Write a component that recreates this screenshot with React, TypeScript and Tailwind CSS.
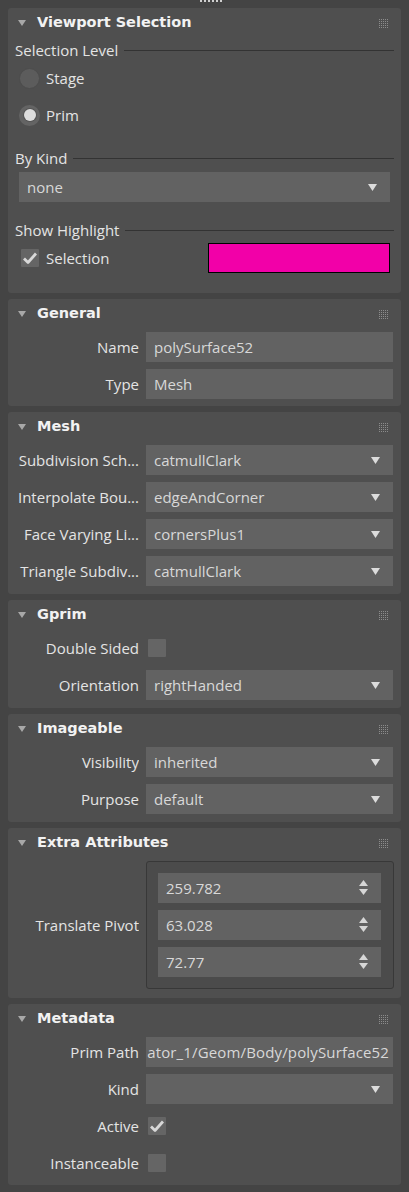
import React from "react";

const body = "font-['Open_Sans',sans-serif] text-[15px]";
const bold = "font-['DejaVu_Sans',sans-serif] font-bold text-[14.5px]";

function Grip() {
  const dots = [];
  for (let r = 0; r < 5; r++) {
    for (let c = 0; c < 5; c++) {
      dots.push(<rect key={`${r}-${c}`} x={c * 2} y={r * 2} width="1" height="1" fill="#8c8c8c" />);
    }
  }
  return (
    <svg width="9" height="9" viewBox="0 0 9 9">
      {dots}
    </svg>
  );
}

function Caret() {
  return (
    <svg width="8" height="6" viewBox="0 0 8 6">
      <path d="M0 0 H8 L4 6 Z" fill="#a8a8a8" />
    </svg>
  );
}

function DownArrow() {
  return (
    <svg width="9" height="7" viewBox="0 0 9 7">
      <path d="M0 0 H9 L4.5 7 Z" fill="#dcdcdc" />
    </svg>
  );
}

function Spin() {
  return (
    <svg width="9" height="16" viewBox="0 0 9 16">
      <path d="M4.5 0 L9 6 H0 Z" fill="#d6d6d6" />
      <path d="M0 9 H9 L4.5 15 Z" fill="#d6d6d6" />
    </svg>
  );
}

function Tick() {
  return (
    <svg width="14" height="12" viewBox="0 0 14 12">
      <path d="M1 6.5 L5 10.5 L13 1.5" fill="none" stroke="#d8d8d8" strokeWidth="2.8" strokeLinejoin="round" />
    </svg>
  );
}

function Panel({ title, children }: { title: string; children: React.ReactNode }) {
  return (
    <section className="rounded-[3px] bg-[#4f4f4f]">
      <div className="flex h-[30px] items-center pl-[10px] pr-[13px]">
        <Caret />
        <h2 className={`${bold} ml-[11px] text-[#f2f2f2]`}>{title}</h2>
        <div className="ml-auto">
          <Grip />
        </div>
      </div>
      {children}
    </section>
  );
}

function Row({ label, children }: { label: string; children: React.ReactNode }) {
  return (
    <div className="grid grid-cols-[131px_1fr] items-center gap-x-[7px]">
      <span className="truncate text-right text-[#e4e4e4]">{label}</span>
      {children}
    </div>
  );
}

function Field({ value, arrow, spin }: { value?: string; arrow?: boolean; spin?: boolean }) {
  return (
    <div className="flex h-[30px] items-center bg-[#626262] pl-[8px] pr-[13px] text-[#d8d8d8]">
      <span className="whitespace-nowrap">{value}</span>
      {arrow && (
        <span className="ml-auto flex">
          <DownArrow />
        </span>
      )}
      {spin && (
        <span className="ml-auto flex">
          <Spin />
        </span>
      )}
    </div>
  );
}

function Check({ on }: { on?: boolean }) {
  return (
    <div className="flex h-[18px] w-[18px] items-center justify-center rounded-[1px] bg-[#656565]">
      {on && <Tick />}
    </div>
  );
}

function GroupLabel({ text }: { text: string }) {
  return (
    <div className="flex h-[20px] items-center gap-[6px]">
      <span className="text-[#e4e4e4]">{text}</span>
      <div className="h-px flex-1 bg-[#333333]" />
    </div>
  );
}

export default function App() {
  return (
    <div className={`${body} min-h-screen w-[409px] bg-[#444444] px-[8px] pb-[8px]`}>
      <div className="flex h-[8px] gap-[2px] pl-[192px]">
        {[0, 1, 2, 3, 4, 5].map((i) => (
          <div key={i} className="h-[2px] w-[2px] bg-[#d0d0d0]" />
        ))}
      </div>

      <div className="flex flex-col gap-[6px]">
        <Panel title="Viewport Selection">
          <div className="px-[7px] pb-[20px] pt-[2px]">
            <GroupLabel text="Selection Level" />
            <div className="mt-[3px] flex h-[30px] items-center gap-[6px] pl-[4px]">
              <div className="h-[21px] w-[21px] rounded-full border border-[#4c4c4c] bg-[#5c5c5c]" />
              <span className="text-[#e4e4e4]">Stage</span>
            </div>
            <div className="mt-[7px] flex h-[30px] items-center gap-[6px] pl-[4px]">
              <div className="flex h-[21px] w-[21px] items-center justify-center rounded-full bg-[#646464]">
                <div className="h-[12px] w-[12px] rounded-full bg-[#dedede] ring-1 ring-[#555555]" />
              </div>
              <span className="text-[#e4e4e4]">Prim</span>
            </div>
            <div className="mt-[18px]">
              <GroupLabel text="By Kind" />
            </div>
            <div className="mx-[4px] mt-[4px]">
              <Field value="none" arrow />
            </div>
            <div className="mt-[18px]">
              <GroupLabel text="Show Highlight" />
            </div>
            <div className="mt-[3px] flex h-[30px] items-center pl-[6px] pr-[4px]">
              <Check on />
              <span className="ml-[7px] text-[#e4e4e4]">Selection</span>
              <div className="ml-auto h-[30px] w-[182px] border border-black bg-[#f200a8]" />
            </div>
          </div>
        </Panel>

        <Panel title="General">
          <div className="flex flex-col gap-[7px] pb-[7px] pr-[8px] pt-[3px]">
            <Row label="Name">
              <Field value="polySurface52" />
            </Row>
            <Row label="Type">
              <Field value="Mesh" />
            </Row>
          </div>
        </Panel>

        <Panel title="Mesh">
          <div className="flex flex-col gap-[7px] pb-[8px] pr-[8px] pt-[3px]">
            <Row label="Subdivision Sch...">
              <Field value="catmullClark" arrow />
            </Row>
            <Row label="Interpolate Bou...">
              <Field value="edgeAndCorner" arrow />
            </Row>
            <Row label="Face Varying Li...">
              <Field value="cornersPlus1" arrow />
            </Row>
            <Row label="Triangle Subdiv...">
              <Field value="catmullClark" arrow />
            </Row>
          </div>
        </Panel>

        <Panel title="Gprim">
          <div className="flex flex-col gap-[7px] pb-[8px] pr-[8px] pt-[3px]">
            <Row label="Double Sided">
              <div className="flex h-[30px] items-center pl-[2px]">
                <Check />
              </div>
            </Row>
            <Row label="Orientation">
              <Field value="rightHanded" arrow />
            </Row>
          </div>
        </Panel>

        <Panel title="Imageable">
          <div className="flex flex-col gap-[7px] pb-[8px] pr-[8px] pt-[3px]">
            <Row label="Visibility">
              <Field value="inherited" arrow />
            </Row>
            <Row label="Purpose">
              <Field value="default" arrow />
            </Row>
          </div>
        </Panel>

        <Panel title="Extra Attributes">
          <div className="pb-[9px] pr-[7px] pt-[3px]">
            <Row label="Translate Pivot">
              <div className="flex flex-col gap-[7px] rounded-[3px] border border-[#383838] bg-[#4b4b4b] py-[11px] pl-[11px] pr-[12px]">
                <Field value="259.782" spin />
                <Field value="63.028" spin />
                <Field value="72.77" spin />
              </div>
            </Row>
          </div>
        </Panel>

        <Panel title="Metadata">
          <div className="flex flex-col gap-[7px] pb-[7px] pr-[8px] pt-[3px]">
            <Row label="Prim Path">
              <div className="flex h-[30px] items-center justify-end overflow-hidden bg-[#626262] pr-[4px] text-[#d8d8d8]">
                <span className="whitespace-nowrap tracking-[0.15px]">ator_1/Geom/Body/polySurface52</span>
              </div>
            </Row>
            <Row label="Kind">
              <Field arrow />
            </Row>
            <Row label="Active">
              <div className="flex h-[30px] items-center pl-[2px]">
                <Check on />
              </div>
            </Row>
            <Row label="Instanceable">
              <div className="flex h-[30px] items-center pl-[2px]">
                <Check />
              </div>
            </Row>
          </div>
        </Panel>
      </div>
    </div>
  );
}
